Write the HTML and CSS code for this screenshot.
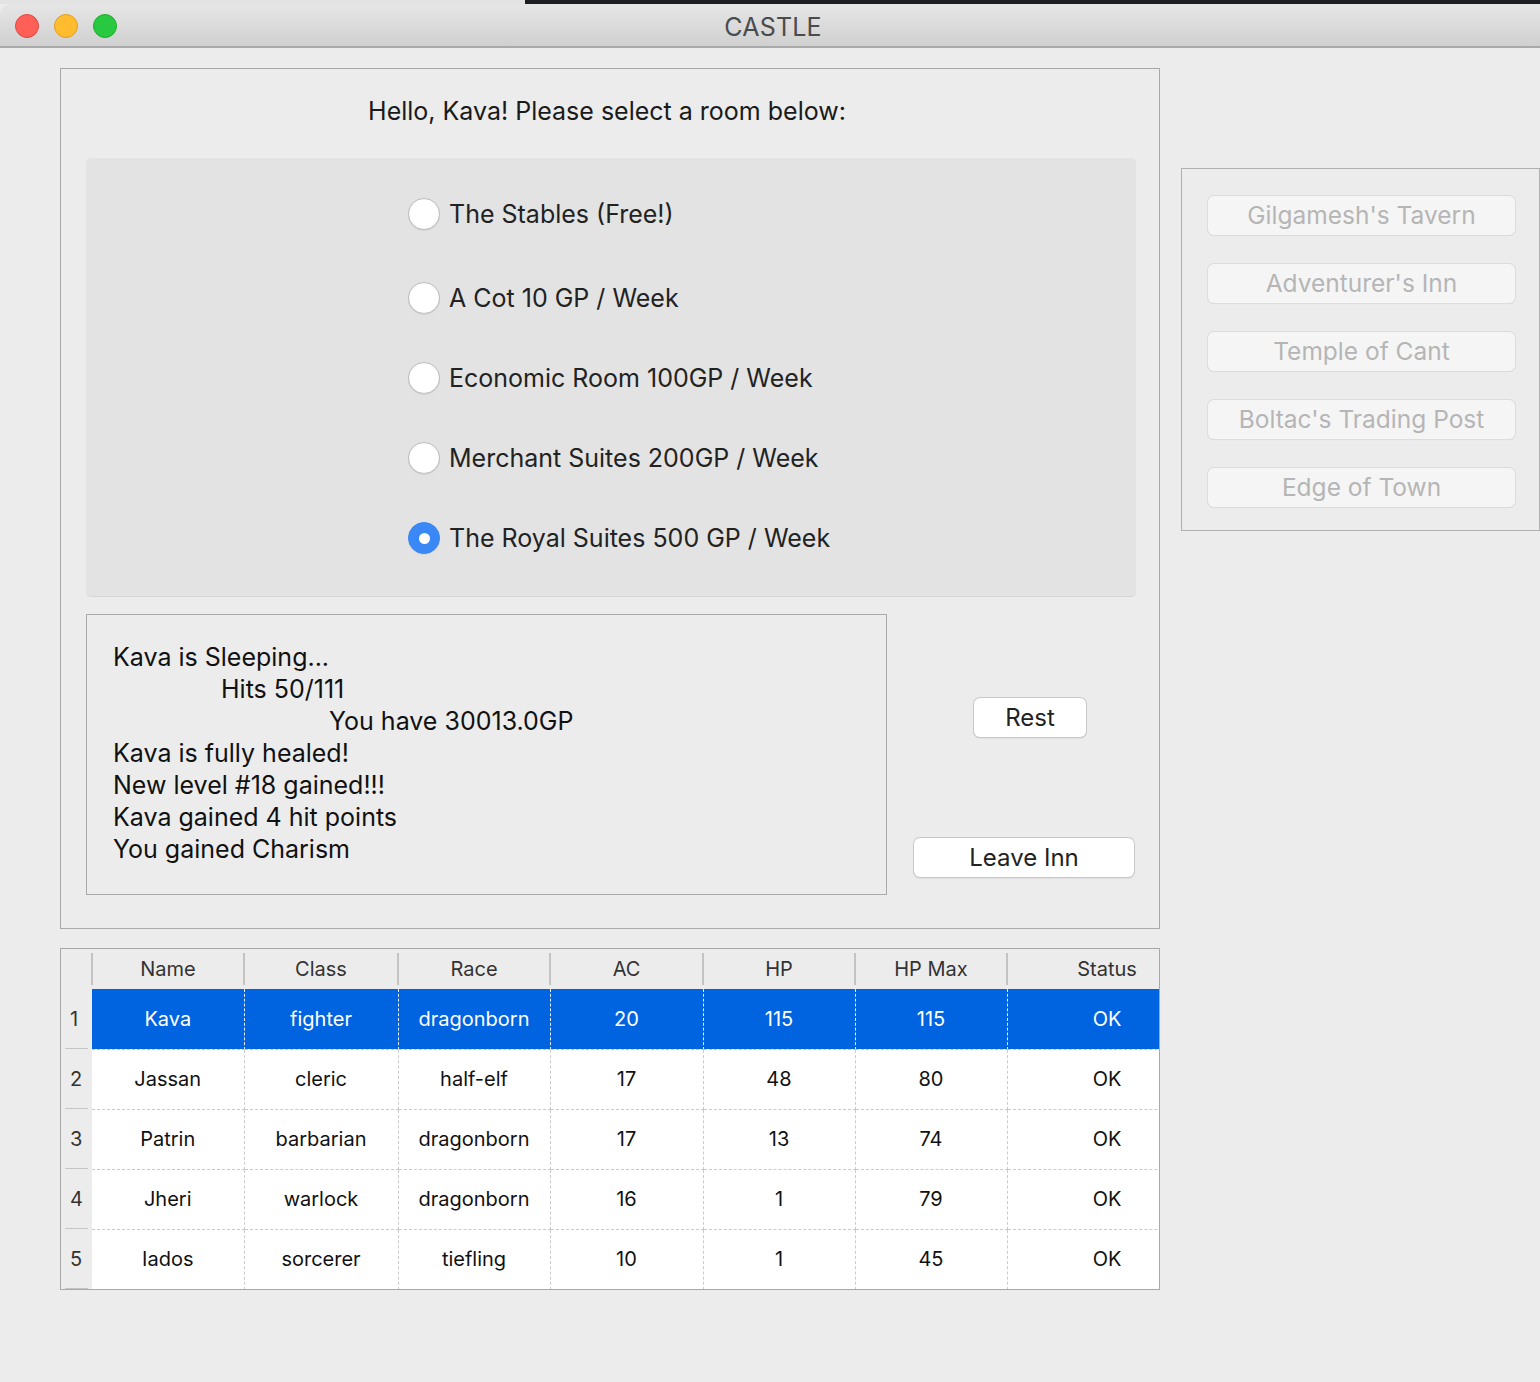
FILE: index.html
```html
<!DOCTYPE html>
<html>
<head>
<meta charset="utf-8">
<title>CASTLE</title>
<link rel="stylesheet" href="styles.css">
</head>
<body>
<div class="topstrip"><div class="ts-left"></div><div class="ts-right"></div></div>
<div class="titlebar">
  <div class="lights">
    <span class="light red"></span>
    <span class="light yellow"></span>
    <span class="light green"></span>
  </div>
  <div class="title">CASTLE</div>
  <div></div>
</div>
<div class="content">
  <div class="leftcol">
    <div class="inn-panel">
      <h1 class="greeting">Hello, Kava! Please select a room below:</h1>
      <div class="rooms">
        <label class="radio first"><span class="dot"></span><span>The Stables (Free!)</span></label>
        <label class="radio"><span class="dot"></span><span>A Cot 10 GP / Week</span></label>
        <label class="radio"><span class="dot"></span><span>Economic Room 100GP / Week</span></label>
        <label class="radio"><span class="dot"></span><span>Merchant Suites 200GP / Week</span></label>
        <label class="radio"><span class="dot on"></span><span>The Royal Suites 500 GP / Week</span></label>
      </div>
      <div class="lower">
        <div class="log">
          <div>Kava is Sleeping...</div>
          <div class="tab1">Hits 50/111</div>
          <div class="tab2">You have 30013.0GP</div>
          <div>Kava is fully healed!</div>
          <div>New level #18 gained!!!</div>
          <div>Kava gained 4 hit points</div>
          <div>You gained Charism</div>
        </div>
        <div class="actions">
          <button class="btn rest">Rest</button>
          <button class="btn leave">Leave Inn</button>
        </div>
      </div>
    </div>
    <div class="table-wrap">
      <table class="party">
        <colgroup>
          <col class="c-num"><col class="c-152"><col class="c-154"><col class="c-152"><col class="c-153"><col class="c-152"><col class="c-152"><col class="c-200">
        </colgroup>
        <thead>
          <tr><th class="num"></th><th>Name</th><th>Class</th><th>Race</th><th>AC</th><th>HP</th><th>HP Max</th><th>Status</th></tr>
        </thead>
        <tbody>
          <tr class="sel"><td class="num">1</td><td>Kava</td><td>fighter</td><td>dragonborn</td><td>20</td><td>115</td><td>115</td><td>OK</td></tr>
          <tr><td class="num">2</td><td>Jassan</td><td>cleric</td><td>half-elf</td><td>17</td><td>48</td><td>80</td><td>OK</td></tr>
          <tr><td class="num">3</td><td>Patrin</td><td>barbarian</td><td>dragonborn</td><td>17</td><td>13</td><td>74</td><td>OK</td></tr>
          <tr><td class="num">4</td><td>Jheri</td><td>warlock</td><td>dragonborn</td><td>16</td><td>1</td><td>79</td><td>OK</td></tr>
          <tr><td class="num">5</td><td>Iados</td><td>sorcerer</td><td>tiefling</td><td>10</td><td>1</td><td>45</td><td>OK</td></tr>
        </tbody>
      </table>
    </div>
  </div>
  <div class="sidepanel">
    <button class="sbtn" disabled>Gilgamesh's Tavern</button>
    <button class="sbtn" disabled>Adventurer's Inn</button>
    <button class="sbtn" disabled>Temple of Cant</button>
    <button class="sbtn" disabled>Boltac's Trading Post</button>
    <button class="sbtn" disabled>Edge of Town</button>
  </div>
</div>
</body>
</html>
```
FILE: styles.css
```css
* { box-sizing: border-box; }
html, body {
  margin: 0;
  padding: 0;
}
body {
  width: 1540px;
  height: 1382px;
  overflow: hidden;
  background: #ececec;
  font-family: Inter, "Noto Sans", sans-serif;
  color: #1f1f1f;
}

.topstrip { display: flex; height: 4px; }
.ts-left { width: 525px; background: #e3e3e3; }
.ts-right { flex: 1; background: #1d1e22; }

.titlebar {
  height: 44px;
  background: linear-gradient(#e6e6e6, #d0d0d0);
  border-bottom: 2px solid #a9a9a9;
  border-top-left-radius: 10px;
  display: grid;
  grid-template-columns: 1fr auto 1fr;
  align-items: center;
}
.lights { display: flex; gap: 15px; padding-left: 15px; padding-top: 2px; }
.light { width: 24px; height: 24px; border-radius: 50%; display: block; }
.red { background: #fe5f57; border: 1px solid #e2463f; }
.yellow { background: #febc2e; border: 1px solid #dfa023; }
.green { background: #28c840; border: 1px solid #1dad2b; }
.title { font-size: 25px; color: #4b4b4b; padding: 4px 0 0 6px; letter-spacing: 0.2px; }

.content {
  display: flex;
  align-items: flex-start;
  gap: 21px;
  padding: 20px 0 0 60px;
}
.leftcol { width: 1100px; display: flex; flex-direction: column; gap: 19px; }

.inn-panel {
  height: 861px;
  border: 1px solid #a9a9a9;
}
.greeting {
  margin: 0 0 33px;
  padding-top: 28px;
  font-size: 25px;
  line-height: 28px;
  font-weight: normal;
  text-align: center;
  color: #1a1a1a;
  padding-right: 6px;
}
.rooms {
  margin-left: 25px;
  width: 1050px;
  height: 439px;
  background: #e3e3e3;
  border-radius: 5px;
  border-bottom: 1px solid #d4d4d4;
  padding: 40px 0 0 322px;
  display: flex;
  flex-direction: column;
  gap: 48px;
}
.radio {
  display: flex;
  align-items: center;
  gap: 9px;
  height: 32px;
  font-size: 25px;
  color: #222;
}
.radio.first { margin-bottom: 4px; }
.dot {
  width: 32px;
  height: 32px;
  border-radius: 50%;
  background: #fff;
  border: 1px solid #bdbdbd;
  box-shadow: 0 0.5px 1px rgba(0,0,0,0.12);
  display: flex;
  align-items: center;
  justify-content: center;
  flex: none;
}
.dot.on { background: #3a87f6; border-color: #3a87f6; }
.dot.on::after {
  content: "";
  width: 11px;
  height: 11px;
  border-radius: 50%;
  background: #fff;
}

.lower { display: flex; margin: 17px 0 0 25px; }
.log {
  width: 801px;
  height: 281px;
  border: 1px solid #a9a9a9;
  padding: 26px 0 0 26px;
  font-size: 25px;
  line-height: 32px;
  color: #111;
}
.tab1 { padding-left: 108px; }
.tab2 { padding-left: 216px; }

.actions { width: 248px; display: flex; flex-direction: column; align-items: flex-start; }
.btn {
  font-family: inherit;
  font-size: 24px;
  color: #222;
  background: #fff;
  border: none;
  border-radius: 6px;
  box-shadow: 0 0 0 1px #c8c8c8, 0 1px 1.5px rgba(0,0,0,0.22);
  height: 39px;
  padding: 0;
}
.rest { width: 112px; margin: 84px 0 0 87px; }
.leave { width: 220px; margin: 101px 0 0 27px; }

.sidepanel {
  margin-top: 100px;
  width: 359px;
  height: 363px;
  border: 1px solid #b0b0b0;
  padding: 27px 0 0 26px;
  display: flex;
  flex-direction: column;
  gap: 29px;
}
.sbtn {
  width: 307px;
  height: 39px;
  font-family: inherit;
  font-size: 24.5px;
  line-height: 36px;
  color: #b5b5b5;
  background: #f5f5f5;
  border: none;
  border-radius: 6px;
  box-shadow: 0 0 0 1px #dcdcdc, 0 1px 1px rgba(0,0,0,0.08);
  padding: 0 0 2px;
}

.table-wrap {
  height: 342px;
  border: 1px solid #a9a9a9;
  overflow: hidden;
  background: #fff;
}
.party {
  table-layout: fixed;
  border-collapse: collapse;
  width: 1146px;
  font-size: 20px;
}
.c-num { width: 31px; }
.c-152 { width: 152px; }
.c-153 { width: 153px; }
.c-154 { width: 154px; }
.c-200 { width: 200px; }
.party th {
  height: 40px;
  background: #ececec;
  font-weight: normal;
  color: #333;
  position: relative;
  padding: 0;
}
.party th:not(.num)::before {
  content: "";
  position: absolute;
  left: -1px;
  top: 4px;
  bottom: 4px;
  width: 2px;
  background: #c4c4c4;
}
.party td {
  height: 60px;
  text-align: center;
  color: #111;
  border-right: 1px dashed #cacaca;
  border-bottom: 1px dashed #cacaca;
  padding: 0;
}
.party td.num {
  background: #ececec;
  border: none;
  text-align: left;
  padding-left: 9px;
  color: #333;
  position: relative;
}
.party td.num::after {
  content: "";
  position: absolute;
  left: 4px;
  right: 4px;
  bottom: -1px;
  height: 2px;
  background: #c4c4c4;
}
.party tr.sel td:not(.num) {
  background: #0064e1;
  color: #fff;
  border-right-color: #e6efff;
}
```
